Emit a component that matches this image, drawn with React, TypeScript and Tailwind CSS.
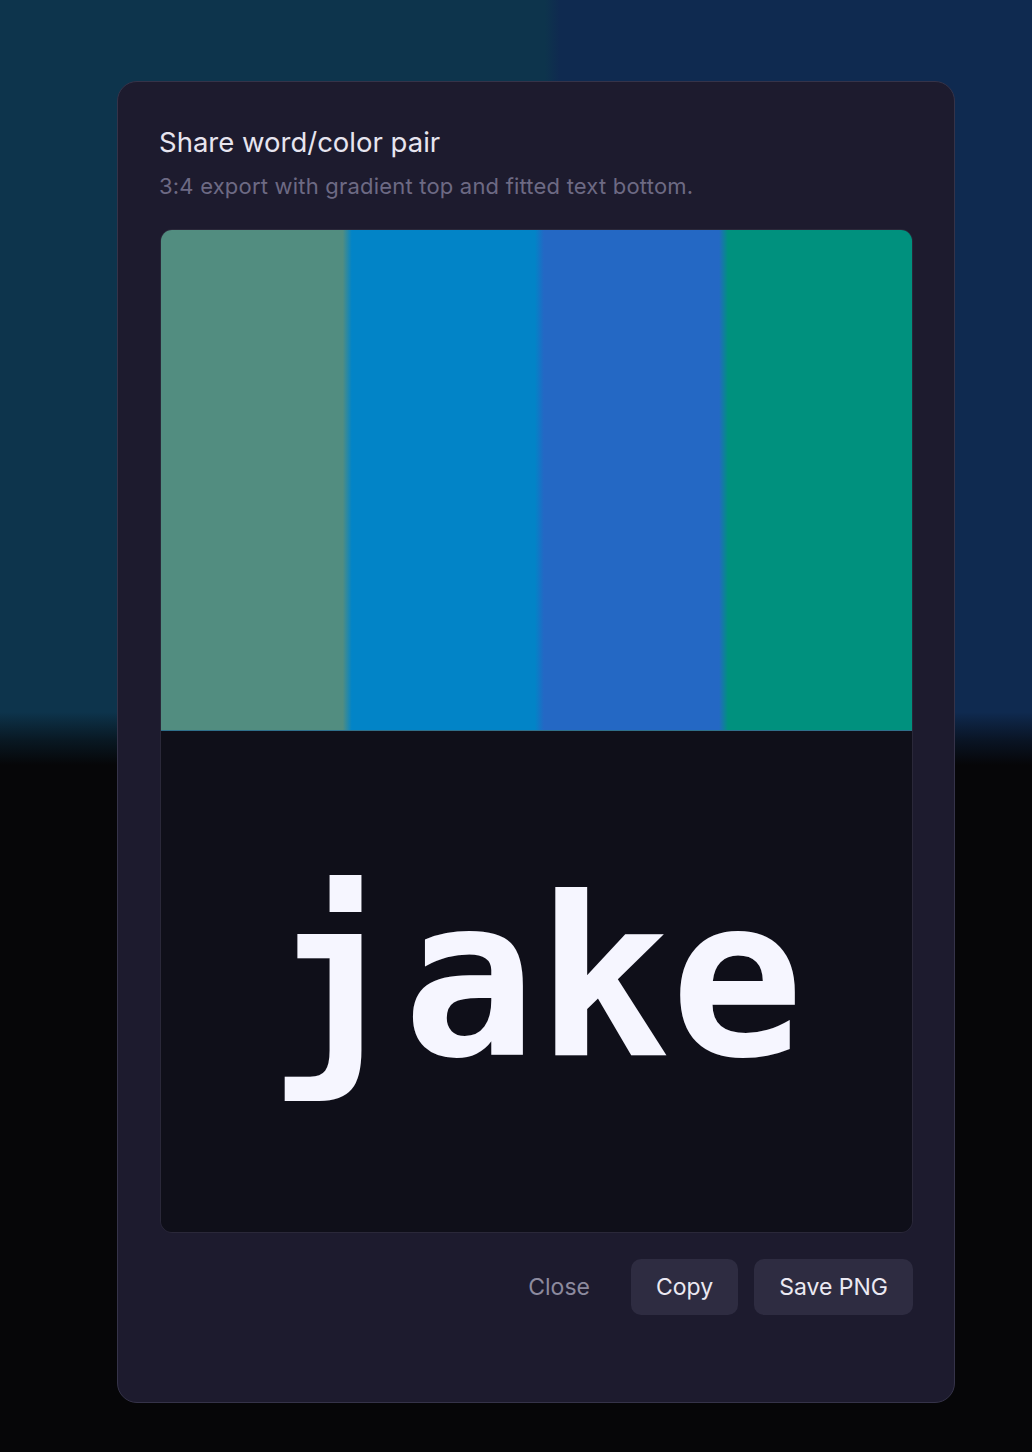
import React from "react";

export default function App() {
  return (
    <div className="relative w-full min-h-[1452px] overflow-hidden bg-[#060608] font-['Inter','Liberation_Sans',sans-serif]">
      {/* page underneath the dialog */}
      <div className="flex flex-col h-[1452px]">
        <div className="h-[770px] bg-[linear-gradient(180deg,rgba(6,6,8,0)_0px,rgba(6,6,8,0)_712px,rgba(6,6,8,0.6)_740px,#060608_765px),linear-gradient(90deg,#0d344c_0%,#0d344c_52.8%,#0f2a50_54.2%,#0f2a50_100%)]" />
        <div className="flex-1 bg-[#060608]" />
      </div>

      {/* dialog overlay */}
      <div className="absolute inset-0 pt-[81px] pl-[117px]">
        <div className="w-[838px] h-[1322px] rounded-[20px] border border-[#353349] bg-[#1d1b2e] px-[42px] pt-[42px]">
          <h2 className="-ml-[1px] text-[27.5px] leading-[36px] font-normal text-[#e7e5ef]">
            Share word/color pair
          </h2>
          <p className="-ml-[1px] mt-[11px] text-[22px] leading-[30px] tracking-[0.2px] text-[#6d6a84]">
            3:4 export with gradient top and fitted text bottom.
          </p>

          <div className="mt-[28px] w-[753px] h-[1004px] rounded-[12px] border border-[#2a2839] overflow-hidden flex flex-col">
            <div className="h-[501px] bg-[linear-gradient(90deg,#528d80_0%,#528d80_24.2%,#0284c7_25.4%,#0284c7_49.8%,#2468c4_51%,#2468c4_74.3%,#00917e_75.5%,#00917e_100%)] border-b border-[#2f6f8a]" />
            <div className="flex-1 bg-[#0f0f19] flex items-center justify-center pb-[7px]">
              <span className="font-['DejaVu_Sans_Mono',monospace] font-bold text-[222px] leading-none text-[#f6f6ff]">
                jake
              </span>
            </div>
          </div>

          <div className="mt-[26px] -mr-[1px] flex justify-end gap-[16px]">
            <button className="h-[56px] px-[25px] rounded-[10px] text-[23px] text-[#8c8a9e]">
              Close
            </button>
            <button className="h-[56px] px-[25px] rounded-[10px] bg-[#2e2c41] text-[23px] text-[#ebe9f2]">
              Copy
            </button>
            <button className="h-[56px] px-[25px] rounded-[10px] bg-[#2e2c41] text-[23px] text-[#ebe9f2]">
              Save PNG
            </button>
          </div>
        </div>
      </div>
    </div>
  );
}
